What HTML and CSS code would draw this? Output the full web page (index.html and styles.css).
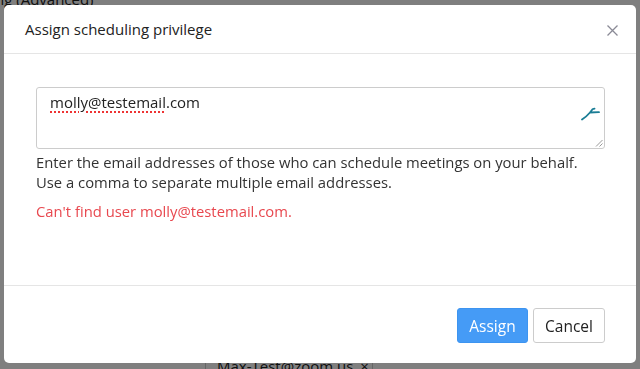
FILE: index.html
```html
<!DOCTYPE html>
<html lang="en">
    <head>
        <meta charset="UTF-8">
        <title>Assign scheduling privilege</title>
        <link rel="stylesheet" href="styles.css">
    </head>
    <body>
        <div class="page">
            <p class="page-title">Scheduling (Advanced)</p>
            <div class="page-tags">
                <span class="tag">Max-Test@zoom.us <span class="tag-x">&times;</span></span>
            </div>
        </div>

        <div class="overlay">
            <div class="modal">
                <div class="modal-header">
                    <h4 class="modal-title">Assign scheduling privilege</h4>
                    <span class="modal-close">
                        <svg width="11" height="11" viewBox="0 0 11 11">
                            <path d="M0.5 0.5 L10.5 10.5 M10.5 0.5 L0.5 10.5" stroke="#8a8a96" stroke-width="1.3" fill="none"/>
                        </svg>
                    </span>
                </div>

                <div class="modal-body">
                    <div class="email-box">
                        <span class="misspelled">molly@testemail</span>.com
                        <svg class="check-icon" width="20" height="16" viewBox="0 0 20 16">
                            <path d="M1 14.5 C4 12.5 6.5 10.5 9 7.5 L18 7.2 M9 7.5 L11.5 4.2 L13.5 3.6" stroke="#1a7d95" stroke-width="1.8" fill="none" stroke-linecap="round"/>
                        </svg>
                        <svg class="resize-grip" width="8" height="8" viewBox="0 0 8 8">
                            <path d="M7.5 1 L1 7.5 M7.5 4.5 L4.5 7.5" stroke="#999" stroke-width="1" fill="none"/>
                        </svg>
                    </div>
                    <p class="help">Enter the email addresses of those who can schedule meetings on your behalf.<br>
                        Use a comma to separate multiple email addresses.</p>
                    <p class="error">Can't find user molly@testemail.com.</p>
                </div>

                <div class="modal-footer">
                    <button class="btn btn-primary">Assign</button>
                    <button class="btn btn-default">Cancel</button>
                </div>
            </div>
        </div>
    </body>
</html>
```

FILE: styles.css
```css
html, body {
    margin: 0;
    height: 100%;
}

body {
    font-family: "Open Sans", "Liberation Sans", sans-serif;
    color: #333;
    background-color: #fff;
    overflow: hidden;
}

/* page behind the dialog */
.page {
    height: 100%;
    display: flex;
    flex-direction: column;
    justify-content: space-between;
}

.page-title {
    margin: -11px 0 0 -64px;
    font-size: 15px;
    color: #222;
}

.page-tags {
    margin-left: 205px;
    width: 168px;
    height: 12px;
    border-left: 1px solid #ccc;
    border-right: 1px solid #ccc;
    padding-left: 11px;
    box-sizing: border-box;
    overflow: hidden;
}

.tag {
    display: block;
    margin-top: -1px;
    font-size: 15px;
    white-space: nowrap;
    color: #222;
}

.tag-x {
    margin-left: 3px;
}

/* dialog */
.overlay {
    position: fixed;
    inset: 0;
    background-color: rgba(0, 0, 0, 0.5);
    padding: 5px 4px 6px 4px;
}

.modal {
    height: 358px;
    background-color: #fff;
    border-radius: 5px;
    display: flex;
    flex-direction: column;
}

.modal-header {
    height: 48px;
    border-bottom: 1px solid #e5e5e5;
    display: flex;
    align-items: center;
    justify-content: space-between;
    padding: 0 18px 0 21px;
}

.modal-title {
    margin: 0;
    font-size: 15px;
    font-weight: normal;
    color: #222;
}

.modal-close {
    display: flex;
    margin-top: 2px;
}

.modal-body {
    flex: 1;
    padding: 33px 31px 0 32px;
}

.email-box {
    position: relative;
    height: 54px;
    border: 1px solid #ccc;
    border-radius: 3px;
    padding: 3px 13px;
    font-size: 15px;
    line-height: 22px;
    color: #222;
}

.misspelled {
    text-decoration: underline dotted #e33;
    text-decoration-thickness: 1.5px;
    text-underline-offset: 3px;
}

.check-icon {
    position: absolute;
    right: 3px;
    top: 17px;
}

.resize-grip {
    position: absolute;
    right: 1px;
    bottom: 1px;
}

.help {
    margin: 3px 0 0 0;
    font-size: 14.8px;
    line-height: 20px;
    color: #333;
}

.error {
    margin: 9px 0 0 0;
    font-size: 14.8px;
    line-height: 20px;
    color: #e8484f;
}

.modal-footer {
    height: 78px;
    border-top: 1px solid #e5e5e5;
    display: flex;
    justify-content: flex-end;
    align-items: flex-start;
    gap: 5px;
    padding: 22px 31px 0 0;
    box-sizing: border-box;
}

.btn {
    height: 35px;
    border-radius: 3px;
    font-family: "Open Sans", "Liberation Sans", sans-serif;
    font-size: 15.5px;
    padding: 0 8px;
}

.btn-primary {
    width: 71px;
    background-color: #459bf6;
    border: 1px solid #3d94f0;
    color: #fff;
}

.btn-default {
    width: 72px;
    background-color: #fff;
    border: 1px solid #ccc;
    color: #222;
}
```
